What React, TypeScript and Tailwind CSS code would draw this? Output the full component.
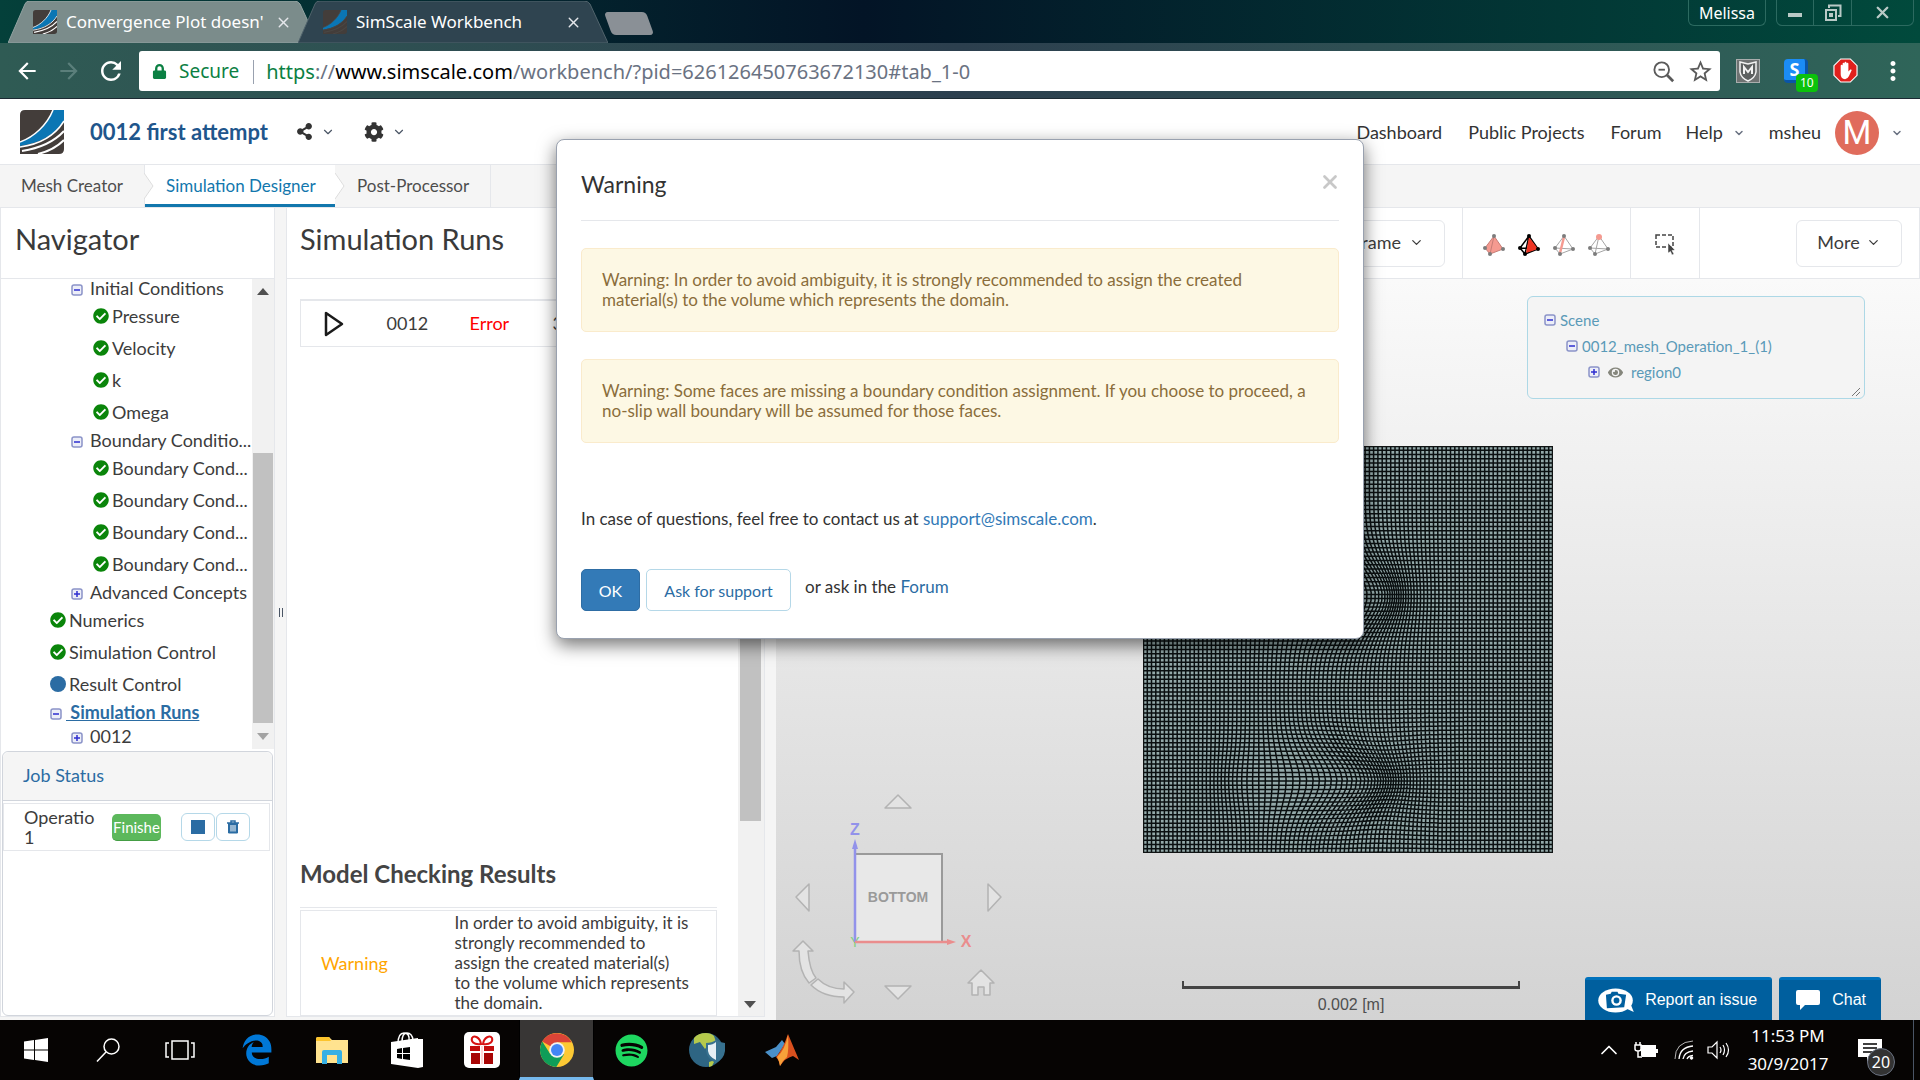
import React from "react";
import {
  FaShareAlt,
  FaCog,
  FaCheckCircle,
  FaSpotify,
  FaEdgeLegacy,
  FaLock,
  FaEye,
} from "react-icons/fa";
import {
  MdArrowBack,
  MdArrowForward,
  MdRefresh,
  MdMoreVert,
  MdStarBorder,
} from "react-icons/md";
import { ChevronDown, ChevronUp, X } from "lucide-react";

function SimLogo({ className, bare }: { className: string; bare?: boolean }) {
  const gap = bare ? "#4a4744" : "#ffffff";
  return (
    <svg viewBox="0 0 44 44" className={className} aria-hidden="true">
      <path d="M5 0H44V39Q44 44 39 44H0V5Q0 0 5 0Z" fill="#433d3a" />
      <path d="M33 0H44V11C36 23 22 33 0 36V32C14 27 27 15 33 0Z" fill="#0b76b4" />
      <path d="M33 0C27 15 14 27 0 32" fill="none" stroke={gap} strokeWidth="1.500" />
      <path d="M44 11C36 24 22 34 0 37" fill="none" stroke={gap} strokeWidth="1.500" />
      <path d="M44 21C34 32 21 38 2 41" fill="none" stroke={gap} strokeWidth="2" />
      <path d="M44 30C37 37 30 41 18 44" fill="none" stroke={gap} strokeWidth="2" />
    </svg>
  );
}

function BrowserTab({ title, active }: { title: string; active?: boolean }) {
  return (
    <div className={active ? "relative -ml-5 h-[42px] w-[310px]" : "relative h-[42px] w-[310px]"}>
      <svg viewBox="0 0 310 42" preserveAspectRatio="none" className="absolute inset-0 h-full w-full" aria-hidden="true">
        <path
          d="M0 42L17 3Q18 0 22 0H286Q290 0 292 3L310 42Z"
          fill={active ? "#2f4450" : "#7b8c8b"}
          stroke={active ? "#51646c" : "#93a3a2"}
        />
      </svg>
      <div className="relative flex h-full items-center pr-[26px] pl-[25px] text-[17px] text-white">
        <SimLogo className="h-6 w-6 shrink-0" bare={active} />
        <span className="ml-[9px] flex-1 overflow-hidden whitespace-nowrap">{title}</span>
        <button aria-label="Close tab" className="ml-3 text-gray-200">
          <X size={17} strokeWidth={2} />
        </button>
      </div>
    </div>
  );
}

function BrowserChrome() {
  return (
    <div className="shrink-0 font-['Noto_Sans',sans-serif]">
      <div className="flex h-[43px] items-end bg-linear-to-r from-[#04403a] via-[#031426] via-45% to-[#014a3c] pl-2">
        <BrowserTab title="Convergence Plot doesn'" />
        <BrowserTab title="SimScale Workbench" active />
        <button aria-label="New tab" className="mb-2 h-[23px] w-[42px] transform-[skewX(20deg)] rounded-sm bg-[#8a9096]" />
        <div className="ml-auto flex self-start text-white">
          <button className="h-[26px] rounded-b-md border border-t-0 border-[#2c6a60] px-[10px] text-base leading-[26px]">Melissa</button>
          <div className="mr-[6px] ml-[10px] flex h-[26px] rounded-b-md border border-t-0 border-[#2c6a60]">
            <button aria-label="Minimize" className="flex w-[37px] items-center justify-center border-r border-[#2c6a60]">
              <span className="mt-1 h-1 w-[14px] bg-[#b9c9c6]" />
            </button>
            <button aria-label="Restore" className="flex w-[38px] items-center justify-center border-r border-[#2c6a60]">
              <svg viewBox="0 0 18 18" className="h-[18px] w-[18px]" fill="none" stroke="#b9c9c6" strokeWidth="2">
                <path d="M5 4V1.500H16.500V12H14" />
                <rect x="2" y="6" width="10" height="10" />
                <rect x="6" y="10" width="2" height="2" />
              </svg>
            </button>
            <button aria-label="Close" className="flex w-[61px] items-center justify-center text-[#b9c9c6]">
              <X size={19} strokeWidth={3} />
            </button>
          </div>
        </div>
      </div>
      <div className="flex h-14 items-center border-b border-[#1c2a33] bg-linear-to-r from-[#2f5b54] via-[#2c3f4e] via-50% to-[#2f6559] text-white">
        <button aria-label="Back" className="ml-[14px]">
          <MdArrowBack size={26} />
        </button>
        <button aria-label="Forward" className="ml-4 text-[#5b7f7b]">
          <MdArrowForward size={26} />
        </button>
        <button aria-label="Reload" className="ml-[14px]">
          <MdRefresh size={30} />
        </button>
        <div className="ml-[13px] flex h-10 flex-1 items-center rounded-[3px] bg-white pt-0.5 pr-[6px] pl-[13px] text-[20px]">
          <FaLock size={15} className="text-[#0b8043]" />
          <span className="ml-3 text-[19px] text-[#0b8043]">Secure</span>
          <span className="mr-3 ml-[14px] h-6 w-px bg-gray-400" />
          <span role="textbox" aria-label="Address" className="flex-1 whitespace-nowrap text-gray-500">
            <span className="text-[#0b8043]">https</span>://<span className="text-black">www.simscale.com</span>
            /workbench/?pid=626126450763672130#tab_1-0
          </span>
          <button aria-label="Zoom" className="text-[#5a5a5a]">
            <svg viewBox="0 0 24 24" className="h-[22px] w-[22px]" fill="none" stroke="currentColor" strokeWidth="2">
              <circle cx="9.500" cy="9.500" r="8" />
              <path d="M6 9.500H13" />
              <path d="M15 15L22 22" strokeWidth="3" />
            </svg>
          </button>
          <button aria-label="Bookmark" className="ml-3 text-[#5a5a5a]">
            <MdStarBorder size={27} />
          </button>
        </div>
        <button aria-label="Site adviser" className="ml-4">
          <svg viewBox="0 0 24 24" className="h-6 w-6">
            <rect width="24" height="24" fill="#a9adad" />
            <rect x="1" y="1" width="22" height="22" fill="#6f7272" />
            <path d="M4 3L12 5L20 3V13Q19 19 12 22Q5 19 4 13Z" fill="#5d6060" stroke="#f2f2f2" strokeWidth="1.500" />
            <path d="M8 15V8L12 13L16 8V15" fill="none" stroke="#f2f2f2" strokeWidth="2" />
          </svg>
        </button>
        <button aria-label="Extension" className="relative ml-6 h-[25px] w-[25px]">
          <span className="flex h-6 w-6 items-center justify-center rounded-sm border-r-3 border-b-3 border-[#0a55a8] bg-[#1b8cf5] text-[18px] font-bold">S</span>
          <span className="absolute top-4 left-3 rounded-sm bg-[#0bc20b] px-1 text-[12px] leading-[18px]">10</span>
        </button>
        <button aria-label="Ad blocker" className="ml-6">
          <svg viewBox="0 0 26 26" className="h-[25px] w-[25px]">
            <path d="M8 1H18L25 8V18L18 25H8L1 18V8Z" fill="#e1201c" stroke="#fff" strokeWidth="1.200" />
            <path d="M8 13V8Q8 7 9 7T10 8V6Q10 5 11 5T12 6V5Q12 4 13 4T14 5V6Q14 5 15 5T16 6V14L18 12Q19 11.500 19.500 12.500L16.500 19Q15 22 12.500 22Q8 22 8 17Z" fill="#fff" />
          </svg>
        </button>
        <button aria-label="Menu" className="mr-3 ml-5">
          <MdMoreVert size={30} />
        </button>
      </div>
    </div>
  );
}

function AppHeader() {
  return (
    <header className="flex h-[66px] shrink-0 items-center border-b border-gray-200 bg-white pr-[17px] pl-5 text-[18px]">
      <SimLogo className="h-[44px] w-[44px]" />
      <h1 className="ml-[26px] text-[22px] font-bold text-[#1f568c]">0012 first attempt</h1>
      <button aria-label="Share" className="ml-7 flex items-center gap-2 text-[#333]">
        <FaShareAlt size={17} />
        <ChevronDown size={14} className="text-gray-600" />
      </button>
      <button aria-label="Settings" className="ml-[29px] flex items-center gap-2 text-[#333]">
        <FaCog size={20} />
        <ChevronDown size={14} className="text-gray-600" />
      </button>
      <nav className="ml-auto flex items-center pt-0.5 text-[#333]">
        <a href="#dashboard">Dashboard</a>
        <a href="#projects" className="ml-[26px]">Public Projects</a>
        <a href="#forum" className="ml-[26px]">Forum</a>
        <button className="ml-6 flex items-center gap-[10px]">
          Help <ChevronDown size={12} strokeWidth={3} className="text-gray-500" />
        </button>
        <button className="ml-6 flex items-center">
          msheu
          <span className="ml-[14px] flex h-11 w-11 items-center justify-center rounded-full bg-[#e06c5c] font-['Roboto',sans-serif] text-[33px] text-white">M</span>
          <ChevronDown size={12} strokeWidth={3} className="ml-3 text-gray-500" />
        </button>
      </nav>
    </header>
  );
}

function StepArrow({ fill }: { fill: string }) {
  return (
    <svg viewBox="0 0 10 26" className="absolute top-2 -right-[10px] z-10 h-[26px] w-[10px]" aria-hidden="true">
      <path d="M0 0L9 13L0 26" fill={fill} stroke="#dddddd" />
    </svg>
  );
}

function StepTabs() {
  return (
    <nav className="flex h-[43px] shrink-0 items-stretch border-b border-gray-200 bg-[#f5f5f5] text-[17px] leading-[42px] text-[#4d4d4d]">
      <a href="#mesh" className="relative w-[145px] border-r border-gray-200 pl-[21px]">
        Mesh Creator
        <StepArrow fill="#f5f5f5" />
      </a>
      <a href="#simulation" className="relative w-[190px] border-b-[3px] border-[#1277ad] bg-white pl-[21px] text-[#1277ad]">
        Simulation Designer
        <StepArrow fill="#ffffff" />
      </a>
      <a href="#post" className="w-[156px] border-r border-gray-200 pl-[22px]">Post-Processor</a>
    </nav>
  );
}

function Toggle({ open }: { open?: boolean }) {
  return (
    <svg viewBox="0 0 12 12" className="h-3 w-3 shrink-0" aria-hidden="true">
      <rect x="1" y="1" width="10" height="10" rx="2" fill="#eceef8" stroke="#8a93c8" strokeWidth="1.500" />
      <path d={open ? "M3 6H9" : "M3 6H9M6 3V9"} stroke="#2e2ed0" strokeWidth="1.500" />
    </svg>
  );
}

type Row = { label: string; kind: "open" | "closed" | "ok" | "dot"; deep: 0 | 1 | 2; current?: boolean };

const rows: Row[] = [
  { label: "Initial Conditions", kind: "open", deep: 1 },
  { label: "Pressure", kind: "ok", deep: 2 },
  { label: "Velocity", kind: "ok", deep: 2 },
  { label: "k", kind: "ok", deep: 2 },
  { label: "Omega", kind: "ok", deep: 2 },
  { label: "Boundary Conditio...", kind: "open", deep: 1 },
  { label: "Boundary Cond...", kind: "ok", deep: 2 },
  { label: "Boundary Cond...", kind: "ok", deep: 2 },
  { label: "Boundary Cond...", kind: "ok", deep: 2 },
  { label: "Boundary Cond...", kind: "ok", deep: 2 },
  { label: "Advanced Concepts", kind: "closed", deep: 1 },
  { label: "Numerics", kind: "ok", deep: 0 },
  { label: "Simulation Control", kind: "ok", deep: 0 },
  { label: "Result Control", kind: "dot", deep: 0 },
  { label: "Simulation Runs", kind: "open", deep: 0, current: true },
  { label: "0012", kind: "closed", deep: 1 },
];

const indent = ["pl-[49px]", "pl-[70px]", "pl-[92px]"];

function TreeRow({ row }: { row: Row }) {
  const branch = row.kind === "open" || row.kind === "closed";
  return (
    <li className={`flex items-center ${indent[row.deep]} ${branch ? "h-6" : "h-8"}`}>
      {branch && (
        <span className="mt-1 mr-1">
          <Toggle open={row.kind === "open"} />
        </span>
      )}
      {row.kind === "ok" && <FaCheckCircle size={16} className="mr-[3px] shrink-0 text-[#0a850a]" />}
      {row.kind === "dot" && <span className="mr-[3px] h-4 w-4 shrink-0 rounded-full bg-[#2b6ca3]" />}
      <a
        href="#node"
        className={
          row.current
            ? "font-bold whitespace-pre text-[#2b6ca3] underline"
            : branch
              ? "ml-[3px] whitespace-nowrap"
              : "whitespace-nowrap"
        }
      >
        {row.current ? " " + row.label : row.label}
      </a>
    </li>
  );
}

function ArrowGlyph({ down, color }: { down?: boolean; color: string }) {
  return (
    <svg viewBox="0 0 12 7" className="h-[7px] w-3" aria-hidden="true">
      <path d={down ? "M0 0H12L6 7Z" : "M0 7H12L6 0Z"} fill={color} />
    </svg>
  );
}

function Navigator() {
  return (
    <aside className="flex w-[275px] shrink-0 flex-col border border-t-0 border-gray-200 bg-white">
      <h2 className="flex h-[71px] shrink-0 items-center border-b border-gray-200 pb-2 pl-[14px] text-[29px] text-[#3a3a3a]">Navigator</h2>
      <div className="flex h-[470px] shrink-0">
        <ul className="-mt-[3px] min-w-0 flex-1 text-[18px] text-[#3c3c3c]">
          {rows.map((row, i) => (
            <TreeRow key={i} row={row} />
          ))}
        </ul>
        <div className="flex w-[22px] flex-col items-center justify-between bg-[#f1f1f1] pt-[9px] pb-[9px]">
          <ArrowGlyph color="#505050" />
          <span className="mt-auto mb-[10px] h-[270px] w-5 bg-[#c1c1c1]" />
          <ArrowGlyph down color="#a3a3a3" />
        </div>
      </div>
      <section className="mx-px mt-0.5 flex-1 rounded-md border border-gray-300 text-[18px]">
        <h3 className="h-[49px] rounded-t-md border-b border-gray-300 bg-[#f5f5f5] pl-5 leading-[46px]">
          <a href="#jobs" className="text-[#2b6ca3]">Job Status</a>
        </h3>
        <div className="mt-0.5 mr-[2px] flex h-12 items-center border border-gray-200 pl-5 text-[#3c3c3c]">
          <span title="Operation 1" className="w-[69px] leading-5">
            Operatio
            <br />1
          </span>
          <span title="Finished" className="ml-[19px] h-[27px] w-[49px] rounded-[5px] border-b border-[#449d44] bg-[#5cb85c] text-center text-[15px] leading-[27px] text-white">Finishe</span>
          <button aria-label="Stop" className="ml-5 flex h-7 w-[34px] items-center justify-center rounded-md border border-[#b5d8e8]">
            <span className="h-[14px] w-[14px] bg-[#2b6ca3]" />
          </button>
          <button aria-label="Delete" className="ml-px flex h-7 w-[34px] items-center justify-center rounded-md border border-[#b5d8e8]">
            <svg viewBox="0 0 12 14" className="h-[14px] w-3" fill="none" stroke="#2b6ca3">
              <path d="M0 3H12M4 3V1H8V3" strokeWidth="1.500" />
              <path d="M1.500 3V13H10.500V3" fill="#2b6ca3" stroke="#2b6ca3" />
              <path d="M4 5V11.500M6 5V11.500M8 5V11.500" stroke="#fff" />
            </svg>
          </button>
        </div>
      </section>
    </aside>
  );
}

function Splitter({ grip }: { grip?: boolean }) {
  return (
    <div className="flex w-[11px] shrink-0 justify-center pt-[400px]">
      {grip && <span className="h-[9px] w-1 border-x border-gray-600" />}
    </div>
  );
}

function RunsPanel() {
  return (
    <section className="flex w-[479px] shrink-0 flex-col border border-t-0 border-gray-200 bg-white">
      <div className="flex h-[71px] shrink-0 items-center border-b border-gray-200 pb-2 pl-[13px]">
        <h2 className="text-[29px] text-[#3a3a3a]">Simulation Runs</h2>
      </div>
      <div className="flex min-h-0 flex-1">
        <div className="flex min-w-0 flex-1 flex-col overflow-hidden pl-[13px] text-[18px] text-[#3c3c3c]">
          <table className="mt-5 h-12 w-[417px] shrink-0 border border-t-2 border-gray-200">
            <tbody>
              <tr>
                <td className="w-[86px] pl-[23px]">
                  <button aria-label="Start run" className="flex">
                    <svg viewBox="0 0 20 26" className="h-[26px] w-5" fill="none" stroke="#1a1a1a" strokeWidth="2.500" strokeLinejoin="round">
                      <path d="M2 2V24L18 13Z" />
                    </svg>
                  </button>
                </td>
                <td className="w-[83px]">0012</td>
                <td className="w-[83px] text-[#f00]">Error</td>
                <td>3</td>
              </tr>
            </tbody>
          </table>
          <h3 className="mt-auto mb-[18px] text-[24px] leading-[30px] font-bold text-[#444]">Model Checking Results</h3>
          <div className="h-[109px] w-[417px] shrink-0 border-t border-gray-200 pt-0.5">
            <table className="h-[106px] w-full border border-gray-200">
              <tbody>
                <tr>
                  <td className="w-[154px] pl-5 text-[orange]">Warning</td>
                  <td className="pr-3 text-[17px] leading-5">
                    In order to avoid ambiguity, it is strongly recommended to
                    <br />
                    assign the created material(s)
                    <br />
                    to the volume which represents the domain.
                  </td>
                </tr>
              </tbody>
            </table>
          </div>
        </div>
        <div className="flex w-[26px] flex-col justify-between bg-[#f1f1f1] pb-2">
          <span className="ml-0.5 h-[542px] w-[21px] bg-[#c1c1c1]" />
          <span className="ml-[6px] flex">
            <ArrowGlyph down color="#505050" />
          </span>
        </div>
      </div>
    </section>
  );
}

type SelectMode = "volume" | "face" | "edge" | "vertex";

function PickIcon({ mode }: { mode: SelectMode }) {
  const on = mode === "face";
  const node = on ? "#000000" : "#7c7c7c";
  const line = on ? "#000000" : "#a5a5a5";
  return (
    <svg viewBox="0 0 22 22" className="h-[22px] w-[22px]" aria-hidden="true">
      {mode === "volume" && <path d="M11 2L2 14L7 20L20 15Z" fill="#f59a90" />}
      <path
        d={mode === "volume" ? "M11 2L2 14L7 20L20 15ZM11 2L7 20" : "M11 2L2 14L7 20L20 15ZM2 14L20 15M11 2L7 20"}
        fill="none"
        stroke={mode === "volume" ? "#c77d76" : line}
        strokeWidth={on ? 1.5 : 1}
      />
      {on && <path d="M11 3L8 19L20 15Z" fill="#ee3524" />}
      {mode === "edge" && <path d="M11 3L7 19" stroke="#f59a90" strokeWidth="2.500" />}
      <circle cx="2" cy="14" r="2" fill={node} />
      <circle cx="7" cy="20" r="2" fill={node} />
      <circle cx="20" cy="15" r="2" fill={node} />
      <circle cx="11" cy={mode === "vertex" ? 3 : 2} r={mode === "vertex" ? 3 : 2} fill={mode === "vertex" ? "#f59a90" : node} />
    </svg>
  );
}

const MESH_W = 410;
const MESH_H = 407;
const CELLS = 96;

function warp(x: number, y: number) {
  const blob = (cx: number, cy: number, sx: number, sy: number) =>
    Math.exp(-(((x - cx) / sx) ** 2) - ((y - cy) / sy) ** 2);
  const push = 30 * blob(185, 335, 62, 36) + 32 * blob(195, 150, 55, 42) - 9 * blob(105, 335, 30, 34);
  const lift = 3 * blob(235, 300, 40, 30) - 3 * blob(235, 370, 40, 30);
  return `${(x + push).toFixed(1)} ${(y + lift).toFixed(1)}`;
}

function meshLines() {
  const parts: string[] = [];
  for (let i = 0; i <= CELLS; i++) {
    const v: string[] = [];
    const h: string[] = [];
    for (let j = 0; j <= 50; j++) {
      v.push(warp((i / CELLS) * MESH_W, (j / 50) * MESH_H));
      h.push(warp((j / 50) * MESH_W, (i / CELLS) * MESH_H));
    }
    parts.push("M" + v.join("L"), "M" + h.join("L"));
  }
  return parts.join("");
}

const meshPath = meshLines();

function Mesh() {
  return (
    <svg viewBox="0 0 410 407" className="h-[407px] w-[410px]" role="img" aria-label="Mesh">
      <rect width="410" height="407" fill="#93a9a9" />
      <path d={meshPath} fill="none" stroke="#0a0f10" strokeWidth="1.500" />
      <rect x="0.500" y="0.500" width="409" height="406" fill="none" stroke="#101414" strokeWidth="1.500" />
    </svg>
  );
}

function OrientationCube() {
  return (
    <svg viewBox="0 0 212 214" className="absolute bottom-4 left-[15px] h-[214px] w-[212px]" aria-label="Orientation cube">
      <g fill="#e3e3e3" stroke="#b3b3b3" strokeWidth="1.500" strokeLinejoin="round">
        <path d="M107 5L120 18H94Z" />
        <path d="M107 209L120 196H94Z" />
        <path d="M5 107L18 94V121Z" />
        <path d="M210 107L197 94V121Z" />
        <path d="M190 180L203 193H199V205H193V197H187V205H181V193H177Z" />
        <path d="M12 151L22 161H17C18 173 20 182 25 188L18 193C11 185 8 176 8 161H2Z" />
        <path d="M27 189C34 196 43 199 53 199V192L63 202L53 213V207C40 207 29 204 20 195Z" />
      </g>
      <rect x="64" y="64" width="87" height="88" fill="#e8e8e8" stroke="#9a9a9a" strokeWidth="2" />
      <text x="107" y="112" textAnchor="middle" fontSize="14" fontWeight="700" fill="#9a9a9a" fontFamily="Liberation Sans, sans-serif">BOTTOM</text>
      <text x="64" y="157" textAnchor="middle" fontSize="14" fill="#7fd07f" fontFamily="Liberation Sans, sans-serif">Y</text>
      <path d="M64 152V58" stroke="#9292ea" strokeWidth="2.500" />
      <path d="M64 49L67 59H61Z" fill="#9292ea" />
      <path d="M64 152H157" stroke="#ea8d8d" strokeWidth="2.500" />
      <path d="M165 152L156 149V155Z" fill="#ea8d8d" />
      <text x="64" y="45" textAnchor="middle" fontSize="16" fontWeight="700" fill="#9292ea" fontFamily="Liberation Sans, sans-serif">Z</text>
      <text x="175" y="157" textAnchor="middle" fontSize="16" fontWeight="700" fill="#ea8d8d" fontFamily="Liberation Sans, sans-serif">X</text>
    </svg>
  );
}

function Viewer() {
  return (
    <section className="flex min-w-0 flex-1 flex-col">
      <div className="flex h-[71px] shrink-0 items-stretch border-x border-b border-gray-200 bg-white text-[18px] text-[#3c3c3c]">
        <div className="flex w-[686px] items-center justify-end border-r border-gray-200 pr-[17px]">
          <button className="flex h-[47px] w-[160px] items-center justify-end gap-2 rounded-md border border-gray-200 pr-5 pb-0.5">
            Wireframe <ChevronDown size={15} />
          </button>
        </div>
        <div className="flex w-[168px] items-center justify-center gap-[13px] border-r border-gray-200 pt-1">
          {(["volume", "face", "edge", "vertex"] as const).map((m) => (
            <button key={m} aria-label={`Select ${m}`}>
              <PickIcon mode={m} />
            </button>
          ))}
        </div>
        <div className="flex w-[69px] items-center justify-center border-r border-gray-200 pt-0.5">
          <button aria-label="Box select">
            <svg viewBox="0 0 22 22" className="h-[22px] w-[22px]" fill="none" stroke="#444" strokeWidth="1.500">
              <rect x="2" y="2" width="17" height="12" strokeDasharray="4 2" />
              <path d="M14 10L21 17L18 17.500L20 21L18 22L16.500 18.500L14 20Z" fill="#444" stroke="#fff" strokeWidth="0.500" />
            </svg>
          </button>
        </div>
        <div className="flex flex-1 items-center justify-end pr-[17px]">
          <button className="flex h-[47px] w-[106px] items-center justify-center gap-[6px] rounded-md border border-gray-200 pb-0.5">
            More <ChevronDown size={15} />
          </button>
        </div>
      </div>
      <div className="relative flex min-h-0 flex-1 items-center justify-center bg-linear-to-b from-[#fafafa] to-[#d3d3d3]">
        <Mesh />
        <div className="absolute top-[17px] right-[55px] h-[103px] w-[338px] rounded-md border border-[#add8e6] bg-[#f4f4f4] pt-[10px] pl-4 text-[15px] text-[#5a9ab8]">
          <ul className="leading-[26px]">
            <li className="flex items-center gap-1">
              <Toggle open />
              <a href="#scene">Scene</a>
            </li>
            <li className="flex items-center gap-1 pl-[22px]">
              <Toggle open />
              <a href="#mesh-operation">0012_mesh_Operation_1_(1)</a>
            </li>
            <li className="flex items-center pl-11">
              <Toggle />
              <FaEye size={15} className="mx-2 text-[#85867c]" />
              <a href="#region">region0</a>
            </li>
          </ul>
          <svg viewBox="0 0 8 8" className="absolute right-1 bottom-0.5 h-2 w-2" stroke="#777">
            <path d="M0 8L8 0M4 8L8 4" />
          </svg>
        </div>
        <OrientationCube />
        <div className="absolute bottom-[3px] left-[406px] w-[338px] text-center font-['Liberation_Sans',sans-serif] text-base text-[#4f4f4f]">
          <div className="h-2 border-x-2 border-b-3 border-[#444]" />
          <div className="mt-1">0.002 [m]</div>
        </div>
        <div className="absolute right-[39px] bottom-0 flex gap-[7px] font-['Liberation_Sans',sans-serif] text-base text-white">
          <button className="flex h-[43px] items-center rounded-t-[3px] border-t-3 border-[#0072bc] bg-[#005f9e] pr-[15px] pl-[13px]">
            <svg viewBox="0 0 38 26" className="mr-[10px] h-[25px] w-[37px]" aria-hidden="true">
              <ellipse cx="18" cy="13" rx="18" ry="12.500" fill="#fff" />
              <path d="M26 20L37 25L33 15Z" fill="#fff" />
              <path d="M8 7L13 6L14 4H20L21 6L29 7L27 20L9 21Z" fill="#005f9e" />
              <circle cx="19" cy="13" r="5.500" fill="#fff" />
              <circle cx="19" cy="13" r="3" fill="#005f9e" />
            </svg>
            Report an issue
          </button>
          <button className="flex h-[43px] items-center rounded-t-[3px] border-t-3 border-[#0072bc] bg-[#005f9e] pr-[15px] pl-[17px]">
            <svg viewBox="0 0 24 22" className="mr-3 h-[22px] w-6" aria-hidden="true">
              <path d="M2 1H22Q24 1 24 3V14Q24 16 22 16H9L4 21V16H2Q0 16 0 14V3Q0 1 2 1Z" fill="#fff" />
            </svg>
            Chat
          </button>
        </div>
      </div>
    </section>
  );
}

function Alert({ children }: { children: React.ReactNode }) {
  return <p className="mt-[27px] min-h-[84px] rounded-[5px] border border-[#faebcc] bg-[#fdf8e4] px-5 pt-[21px] leading-5 text-[#8a6d3b]">{children}</p>;
}

function WarningDialog() {
  return (
    <div role="dialog" aria-labelledby="dialog-title" className="absolute top-[139px] left-1/2 w-[808px] -translate-x-1/2 rounded-lg border border-gray-400 bg-white px-6 pb-[27px] text-[17px] text-[#333] shadow-[0_6px_18px_rgba(0,0,0,0.55)]">
      <div className="flex h-[81px] items-center justify-between border-b border-gray-200 pt-2">
        <h2 id="dialog-title" className="text-[23px]">Warning</h2>
        <button aria-label="Close" className="-mr-[2px] mb-1 text-[#c8c8c8]">
          <X size={22} strokeWidth={3} />
        </button>
      </div>
      <Alert>Warning: In order to avoid ambiguity, it is strongly recommended to assign the created material(s) to the volume which represents the domain.</Alert>
      <Alert>Warning: Some faces are missing a boundary condition assignment. If you choose to proceed, a no-slip wall boundary will be assumed for those faces.</Alert>
      <p className="mt-[66px] leading-5">
        In case of questions, feel free to contact us at <a href="mailto:support@simscale.com" className="text-[#337ab7]">support@simscale.com</a>.
      </p>
      <div className="mt-10 flex text-base">
        <button className="h-[42px] w-[59px] rounded-[5px] border border-[#2e6da4] bg-[#337ab7] pt-0.5 text-white">OK</button>
        <button className="ml-[6px] h-[42px] w-[145px] rounded-[5px] border border-[#b5d8e8] pt-0.5 text-[#2b6ca3]">Ask for support</button>
        <span className="ml-[14px] text-[17px] leading-9">
          or ask in the <a href="#forum" className="text-[#2b6ca3]">Forum</a>
        </span>
      </div>
    </div>
  );
}

function Slot({ label, children, wide, active }: { label: string; children: React.ReactNode; wide?: boolean; active?: boolean }) {
  return (
    <button
      aria-label={label}
      className={
        active
          ? "flex w-[75px] items-center justify-center border-x border-b-3 border-x-black border-b-[#76b9ed] bg-[#383635] pt-[3px]"
          : wide
            ? "flex w-[75px] items-center justify-center"
            : "flex w-[72px] items-center justify-center"
      }
    >
      {children}
    </button>
  );
}

function Taskbar() {
  return (
    <footer className="flex h-[60px] shrink-0 items-stretch bg-[#060403] font-['Noto_Sans',sans-serif] text-white">
      <div className="mr-[3px] flex">
        <Slot label="Start">
          <svg viewBox="0 0 24 24" className="h-6 w-6" fill="#fff">
            <path d="M0 3.500L10 2V11.500H0ZM11 2L24 0V11.500H11ZM0 12.500H10V22L0 20.500ZM11 12.500H24V24L11 22Z" />
          </svg>
        </Slot>
        <Slot label="Search">
          <svg viewBox="0 0 24 24" className="h-6 w-6" fill="none" stroke="#fff" strokeWidth="1.500">
            <circle cx="15.500" cy="8.500" r="7.500" />
            <path d="M10 14L1 23.500" />
          </svg>
        </Slot>
        <Slot label="Task view">
          <svg viewBox="0 0 30 20" className="h-5 w-[30px]" fill="none" stroke="#fff" strokeWidth="1.500">
            <rect x="7" y="1" width="16" height="18" />
            <path d="M4 3H1V17H4M26 3H29V17H26" />
          </svg>
        </Slot>
      </div>
      <Slot label="Edge" wide>
        <FaEdgeLegacy size={32} className="text-[#0078d7]" />
      </Slot>
      <Slot label="File Explorer" wide>
        <svg viewBox="0 0 32 27" className="h-[27px] w-8">
          <path d="M0 2Q0 0 2 0H13L16 3H32V26H0Z" fill="#ffe38f" />
          <path d="M0 2Q0 0 2 0H13L15 4H0Z" fill="#fcc42c" />
          <path d="M6 27V15Q6 13 8 13H24Q26 13 26 15V27H21V18H11V27Z" fill="#35b0e5" />
        </svg>
      </Slot>
      <Slot label="Store" wide>
        <svg viewBox="0 0 32 36" className="h-9 w-8">
          <path d="M7 12Q7 1 13 1T18 9M11 10Q11 1 16 1T22 8" fill="none" stroke="#fff" strokeWidth="1.500" />
          <path d="M0 10L27 6V7L32 7V35L27 36L0 32Z" fill="#fff" />
          <path d="M6 17L11 16V21H6ZM12 16L19 15V21H12ZM6 22H11V27L6 26ZM12 22H19V28L12 27Z" fill="#000" />
        </svg>
      </Slot>
      <Slot label="Gifts" wide>
        <svg viewBox="0 0 36 36" className="h-9 w-9">
          <rect width="36" height="36" rx="5" fill="#fff" />
          <path d="M17 12C9 13 7 9 8 6C10 3 16 5 17 12ZM19 12C27 13 29 9 28 6C26 3 20 5 19 12Z" fill="none" stroke="#d81212" strokeWidth="2" />
          <path d="M6 14H16V19H6ZM20 14H30V19H20Z" fill="#c40d0d" />
          <path d="M7 21H16V32H7ZM20 21H29V32H20Z" fill="#a80505" />
          <path d="M17 14H19V32H17Z" fill="#ffd9d9" />
        </svg>
      </Slot>
      <Slot label="Chrome" active>
        <svg viewBox="0 0 48 48" className="h-[34px] w-[34px]">
          <circle cx="24" cy="24" r="24" fill="#fcc934" />
          <path d="M24 24L3.200 12A24 24 0 0 1 44.800 13H24Z" fill="#db4437" />
          <path d="M3.200 12A24 24 0 0 0 23 48L34 30L14 29Z" fill="#0f9d58" />
          <circle cx="24" cy="24" r="11" fill="#f1f1f1" />
          <circle cx="24" cy="24" r="8.500" fill="#4285f4" />
        </svg>
      </Slot>
      <Slot label="Spotify" wide>
        <FaSpotify size={33} className="text-[#1ed760]" />
      </Slot>
      <Slot label="Secure VPN" wide>
        <svg viewBox="0 0 36 34" className="h-[34px] w-9">
          <circle cx="17" cy="17" r="17" fill="#2e6583" />
          <path d="M5 5Q9 0 17 0Q22 0 25 3L27 9L22 13L20 11L16 16L11 9L5 11ZM20 29L26 27L23 33L20 34Z" fill="#b5c94c" />
          <path d="M17 10Q23 10 27 7Q31 10 36 10V18Q35 26 27 30Q18 26 17 18Z" fill="#37718f" />
          <path d="M19 12Q24 12 27 9V27Q20 24 19 18Z" fill="#e6eff4" />
        </svg>
      </Slot>
      <Slot label="MATLAB" wide>
        <svg viewBox="0 0 34 32" className="h-8 w-[34px]">
          <path d="M0 18L11 13L17 6L20 10L12 22L7 24Z" fill="#4a90c8" />
          <path d="M11 23Q18 15 23 0Q28 12 34 26L28 22Q20 24 15 32Q14 26 11 23Z" fill="#d9501e" />
          <path d="M15 32Q14 26 12 23Q20 16 23 1Q24 16 22 23Q18 26 15 32Z" fill="#f7a13a" />
        </svg>
      </Slot>
      <div className="ml-auto flex items-center">
        <button aria-label="Hidden icons">
          <ChevronUp size={28} strokeWidth={1.5} />
        </button>
        <svg viewBox="0 0 24 18" className="ml-[11px] h-[18px] w-6" aria-label="Battery">
          <rect x="7" y="4" width="15" height="12" fill="#fff" />
          <path d="M22 8H24V12H22Z" fill="#fff" />
          <path d="M2 1V4M6 1V4M1 4H7V8Q7 10 4 10Q1 10 1 8ZM4 10V16H8" fill="#060403" stroke="#fff" strokeWidth="1.500" />
        </svg>
        <svg viewBox="0 0 20 20" className="ml-4 h-5 w-5" fill="none" stroke="#fff" aria-label="Wi-Fi">
          <path d="M1 19Q1 2 19 1" opacity="0.700" />
          <path d="M5 19Q6 7 19 6M9 19Q10 12 19 11M13 19Q14 16 19 15.500" strokeWidth="1.300" />
          <circle cx="17.500" cy="18" r="1.300" fill="#fff" />
        </svg>
        <svg viewBox="0 0 24 20" className="ml-[13px] h-5 w-6" fill="none" stroke="#fff" strokeWidth="1.200" aria-label="Volume">
          <path d="M1 7H5L10 2V18L5 13H1Z" />
          <path d="M13 7Q15 10 13 13M16 5Q19 10 16 15M19 3Q24 10 19 17" />
        </svg>
        <div className="ml-3 w-[90px] text-center text-[17px] leading-7 whitespace-nowrap">
          <div>11:53 PM</div>
          <div>30/9/2017</div>
        </div>
        <button aria-label="Notifications" className="relative ml-[25px] h-7 w-6">
          <svg viewBox="0 0 24 24" className="h-6 w-6">
            <path d="M0 1H24V19H14L9 24V19H0Z" fill="#fff" />
            <path d="M5 6H19M5 10H19M5 14H15" stroke="#000" strokeWidth="1.500" />
          </svg>
          <span className="absolute top-3 left-[9px] flex h-7 w-7 items-center justify-center rounded-full border border-gray-500 bg-[#333] text-base">20</span>
        </button>
        <span className="mr-[6px] ml-[31px] h-full w-px bg-gray-600" />
      </div>
    </footer>
  );
}

export default function App() {
  return (
    <div className="relative flex h-screen flex-col overflow-hidden bg-[#f5f5f5] font-['Lato',sans-serif]">
      <BrowserChrome />
      <AppHeader />
      <StepTabs />
      <main className="flex min-h-0 flex-1">
        <div className="flex pb-[3px]">
          <Navigator />
          <Splitter grip />
          <RunsPanel />
          <Splitter />
        </div>
        <Viewer />
      </main>
      <Taskbar />
      <WarningDialog />
    </div>
  );
}
